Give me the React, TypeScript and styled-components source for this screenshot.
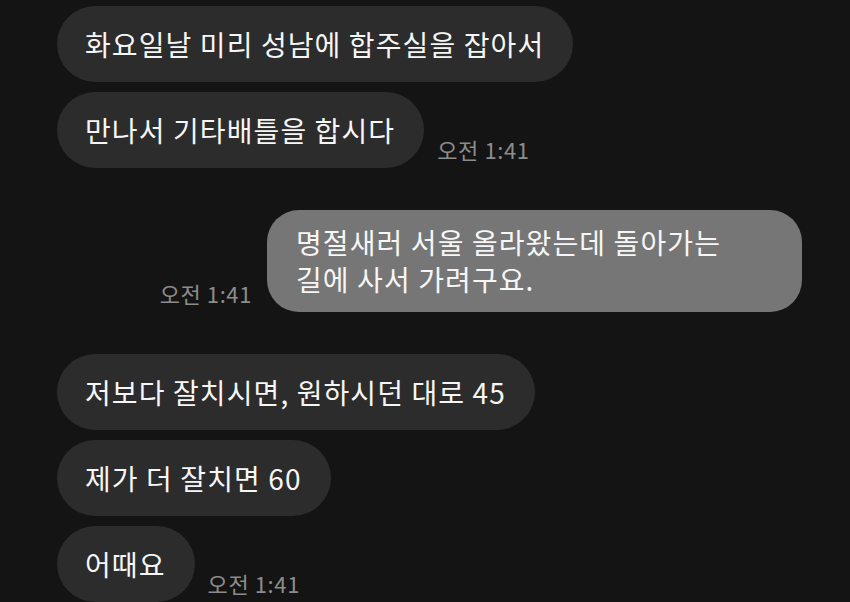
import React from 'react';
import styled, {createGlobalStyle} from "styled-components";

type Message = {
    id: number;
    text: string;
    mine?: boolean;
    time?: string;
};

const groups: Message[][] = [
    [
        {id: 1, text: '화요일날 미리 성남에 합주실을 잡아서'},
        {id: 2, text: '만나서 기타배틀을 합시다', time: '오전 1:41'},
    ],
    [
        {id: 3, text: '명절새러 서울 올라왔는데 돌아가는 길에 사서 가려구요.', mine: true, time: '오전 1:41'},
    ],
    [
        {id: 4, text: '저보다 잘치시면, 원하시던 대로 45'},
        {id: 5, text: '제가 더 잘치면 60'},
        {id: 6, text: '어때요', time: '오전 1:41'},
    ],
];

export default function App() {
    return (
        <>
            <GlobalStyle/>
            <ChatScreen>
                {groups.map((group, i) => (
                    <Group key={i}>
                        {group.map((msg) => (
                            <Row key={msg.id} $mine={!!msg.mine}>
                                {msg.mine && msg.time && <Time>{msg.time}</Time>}
                                <Bubble $mine={!!msg.mine}>{msg.text}</Bubble>
                                {!msg.mine && msg.time && <Time>{msg.time}</Time>}
                            </Row>
                        ))}
                    </Group>
                ))}
            </ChatScreen>
        </>
    );
}

const GlobalStyle = createGlobalStyle`
    html, body {
        margin: 0;
        padding: 0;
        background: #141414;
    }

    body {
        font-family: "Noto Sans CJK KR", "Noto Sans", sans-serif;
    }
`;

const ChatScreen = styled.div`
    width: 850px;
    height: 602px;
    overflow: hidden;
    background: #141414;
    padding: 6px 48px 0 57px;
    box-sizing: border-box;
    display: flex;
    flex-direction: column;
    row-gap: 42px;
`;

const Group = styled.div`
    display: flex;
    flex-direction: column;
    row-gap: 10px;
`;

const Row = styled.div<{ $mine: boolean }>`
    display: flex;
    align-items: flex-end;
    justify-content: ${({$mine}) => ($mine ? 'flex-end' : 'flex-start')};
    column-gap: ${({$mine}) => ($mine ? '15px' : '13px')};
`;

const Bubble = styled.div<{ $mine: boolean }>`
    max-width: 535px;
    box-sizing: border-box;
    padding: ${({$mine}) => ($mine ? '14px 28px 14px 29px' : '19px 29px 19px 28px')};
    border-radius: ${({$mine}) => ($mine ? '32px' : '38px')};
    background: ${({$mine}) => ($mine ? '#767676' : '#2c2c2c')};
    color: #f6f6f6;
    font-size: 28px;
    letter-spacing: 1.1px;
    line-height: ${({$mine}) => ($mine ? '37px' : '38px')};
    word-break: keep-all;
`;

const Time = styled.span`
    color: #8c8c8c;
    font-size: 22px;
    letter-spacing: 0.6px;
    line-height: 24px;
    white-space: nowrap;
    margin-bottom: 7px;
`;
